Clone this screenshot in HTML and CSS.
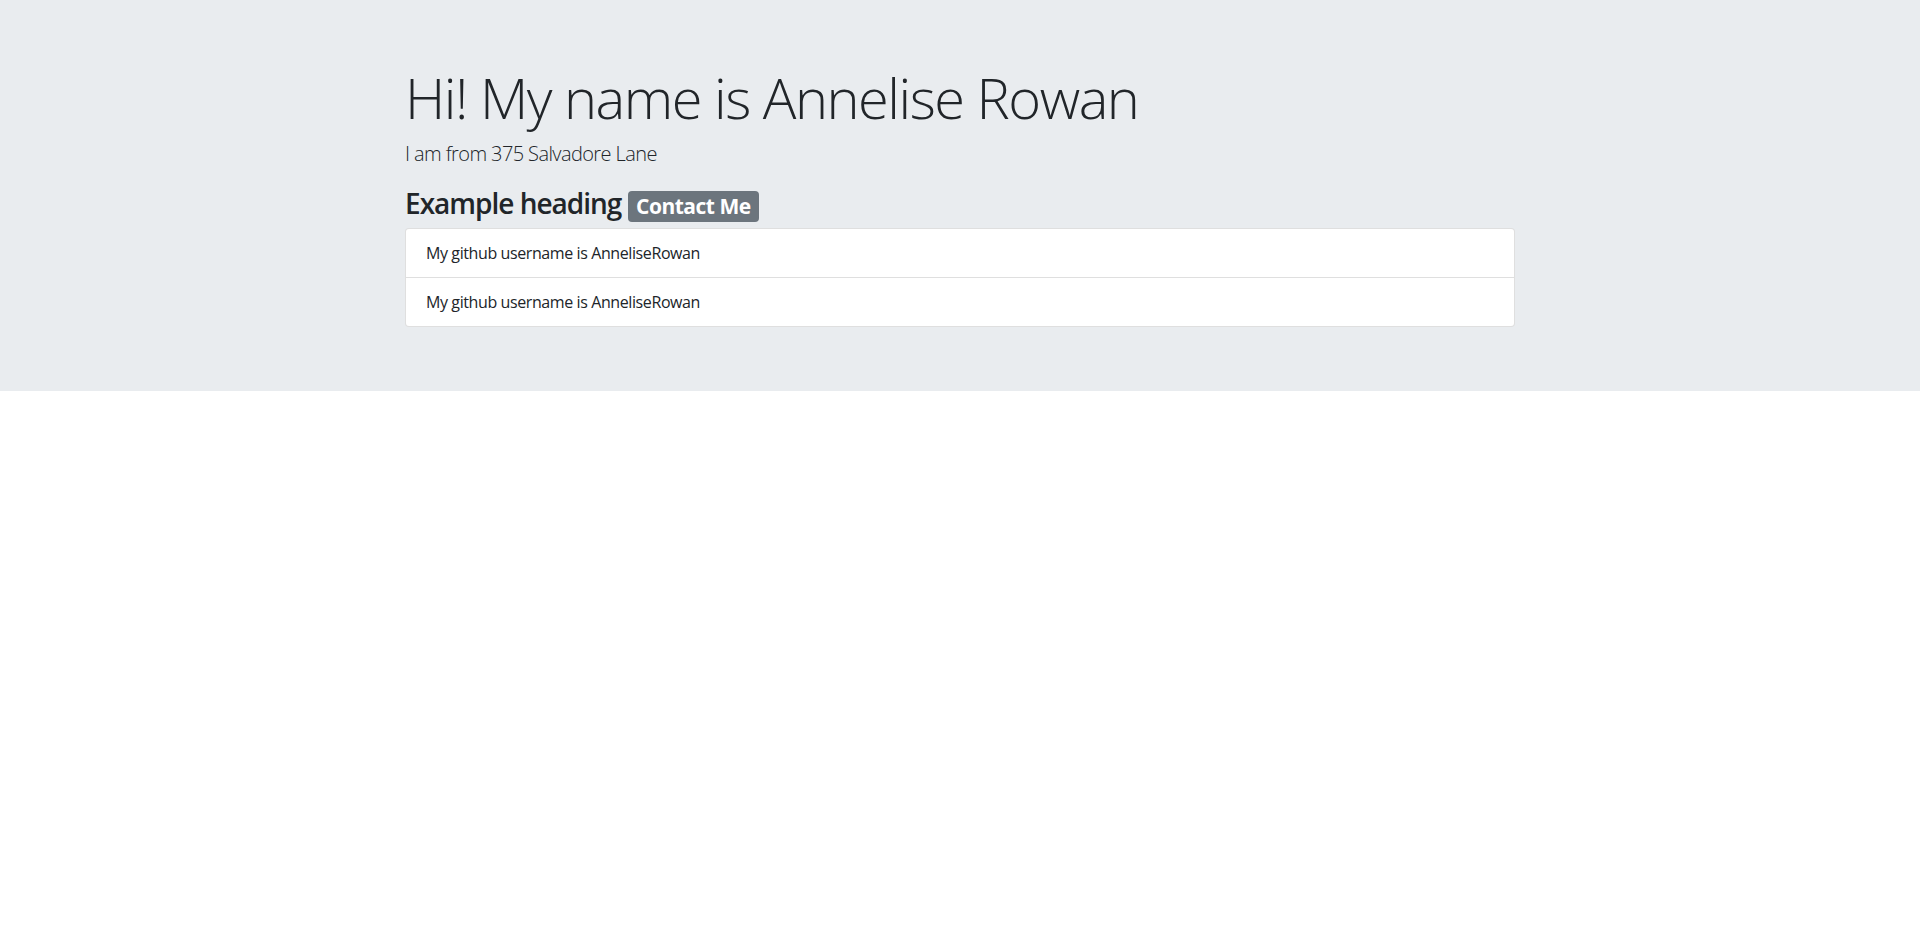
FILE: index.html
```html
<!DOCTYPE html>
<html lang="en">
<head>
<meta charset="utf-8">
<title>Annelise Rowan</title>
<link rel="stylesheet" href="styles.css">
</head>
<body>
<div class="jumbotron">
  <div class="container">
    <h1 class="display">Hi! My name is Annelise Rowan</h1>
    <p class="lead">I am from 375 Salvadore Lane</p>
    <h3 class="heading">Example heading <span class="badge">Contact Me</span></h3>
    <ul class="list-group">
      <li class="list-item">My github username is AnneliseRowan</li>
      <li class="list-item">My github username is AnneliseRowan</li>
    </ul>
  </div>
</div>
</body>
</html>
```
FILE: styles.css
```css
* { box-sizing: border-box; }
html, body { margin: 0; }
body {
  font-family: "Open Sans", "Noto Sans", "Liberation Sans", sans-serif;
  font-size: 16px;
  line-height: 1.5;
  color: #212529;
  background: #fff;
}
.jumbotron {
  background: #e9ecef;
  padding: 64px 32px;
  margin-bottom: 32px;
}
.container {
  max-width: 1140px;
  margin: 0 auto;
  padding: 0 15px;
}
.display {
  font-size: 56px;
  font-weight: 300;
  line-height: 1.2;
  letter-spacing: -1.5px;
  margin: 0 0 8px;
}
.lead {
  font-size: 20px;
  font-weight: 300;
  letter-spacing: -0.6px;
  margin: 0 0 16px;
}
.heading {
  font-size: 28px;
  font-weight: 600;
  line-height: 1.2;
  letter-spacing: -1px;
  margin: 0 0 8px;
  padding-top: 2px;
  margin-bottom: 6px;
}
.badge {
  display: inline-block;
  background: #6c757d;
  color: #fff;
  font-size: 75%;
  font-weight: 700;
  line-height: 1;
  letter-spacing: -0.5px;
  padding: 0.25em 0.4em;
  border-radius: 4px;
  vertical-align: baseline;
}
.list-group {
  list-style: none;
  margin: 0;
  padding: 0;
  display: flex;
  flex-direction: column;
}
.list-item {
  background: #fff;
  border: 1px solid rgba(0,0,0,.125);
  padding: 12px 20px;
  letter-spacing: -0.4px;
}
.list-item + .list-item { border-top-width: 0; }
.list-item:first-child { border-radius: 4px 4px 0 0; }
.list-item:last-child { border-radius: 0 0 4px 4px; }
```
